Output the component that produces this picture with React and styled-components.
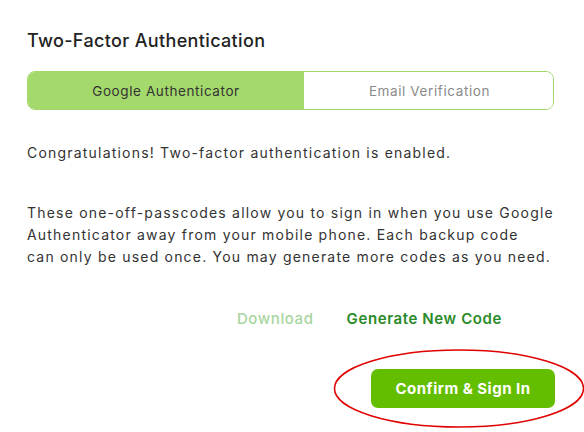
import React from 'react';
import styled, { createGlobalStyle } from 'styled-components';

const GlobalStyle = createGlobalStyle`
  html, body {
    margin: 0;
    padding: 0;
    background: #ffffff;
  }
  body {
    font-family: Inter, "Noto Sans", sans-serif;
    color: #333333;
  }
`;

const Page = styled.div`
  width: 584px;
  height: 432px;
  box-sizing: border-box;
  padding: 29px 30px 0 27px;
  display: flex;
  flex-direction: column;
  overflow: hidden;
`;

const Title = styled.h2`
  margin: 0;
  font-size: 18px;
  line-height: 24px;
  font-weight: 500;
  letter-spacing: 0.35px;
  color: #222222;
`;

const Tabs = styled.div`
  margin-top: 18px;
  height: 39px;
  display: flex;
  border: 1px solid #a4d86c;
  border-radius: 8px;
  overflow: hidden;
  box-sizing: border-box;
`;

const Tab = styled.div`
  flex: 0 0 ${p => p.width}px;
  display: flex;
  align-items: center;
  justify-content: center;
  font-size: 13.5px;
  letter-spacing: 0.6px;
  background: ${p => (p.active ? '#a4d96c' : '#ffffff')};
  color: ${p => (p.active ? '#333333' : '#8a8a8a')};
`;

const Text = styled.p`
  margin: ${p => p.top || 0}px 0 0;
  font-size: 14px;
  line-height: 22px;
  letter-spacing: 1.2px;
  white-space: nowrap;
  color: #333333;
`;

const Links = styled.div`
  margin-top: 40px;
  display: flex;
  justify-content: flex-end;
  gap: 33px;
  padding-right: 52px;
`;

const LinkButton = styled.span`
  font-size: 15px;
  line-height: 22px;
  letter-spacing: 0.6px;
  font-weight: ${p => (p.disabled ? 500 : 600)};
  color: ${p => (p.disabled ? '#a9d5a1' : '#2a8a2a')};
`;

const Footer = styled.div`
  margin-top: 39px;
  display: flex;
  justify-content: flex-end;
`;

const ConfirmWrap = styled.div`
  position: relative;
  margin-right: -1px;
`;

const ConfirmButton = styled.button`
  display: block;
  width: 184px;
  height: 39px;
  border: none;
  border-radius: 7px;
  background: #64be00;
  color: #ffffff;
  font-family: Inter, "Noto Sans", sans-serif;
  font-size: 15px;
  font-weight: 700;
  letter-spacing: 0.5px;
`;

const Ring = styled.svg`
  position: absolute;
  left: -38px;
  top: -20px;
  pointer-events: none;
`;

export default function App() {
  return (
    <>
      <GlobalStyle />
      <Page>
        <Title>Two-Factor Authentication</Title>
        <Tabs>
          <Tab active width={276}>Google Authenticator</Tab>
          <Tab width={251}>Email Verification</Tab>
        </Tabs>
        <Text top={32}>Congratulations! Two-factor authentication is enabled.</Text>
        <Text top={38}>
          These one-off-passcodes allow you to sign in when you use Google
          <br />
          Authenticator away from your mobile phone. Each backup code
          <br />
          can only be used once. You may generate more codes as you need.
        </Text>
        <Links>
          <LinkButton disabled>Download</LinkButton>
          <LinkButton>Generate New Code</LinkButton>
        </Links>
        <Footer>
          <ConfirmWrap>
            <ConfirmButton>Confirm &amp; Sign In</ConfirmButton>
            <Ring width="252" height="80" viewBox="0 0 252 80">
              <ellipse cx="126" cy="39.5" rx="124.5" ry="38.5" fill="none" stroke="#e00000" strokeWidth="1.5" />
            </Ring>
          </ConfirmWrap>
        </Footer>
      </Page>
    </>
  );
}
